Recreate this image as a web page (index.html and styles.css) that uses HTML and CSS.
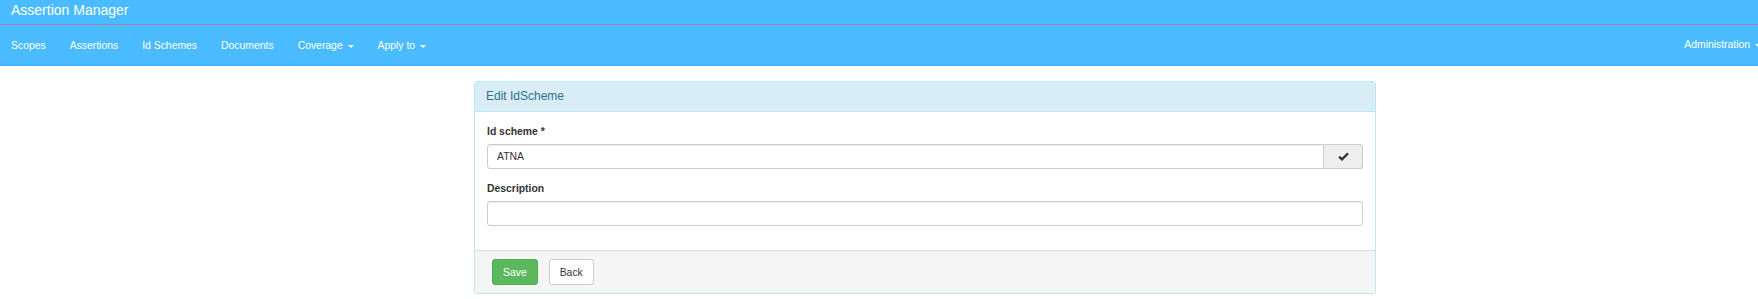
FILE: index.html
```html
<!DOCTYPE HTML>
<html>
<head>
  <title>Assertion Manager</title>
  <meta name="viewport" content="width=device-width, initial-scale=1">
  <link rel="stylesheet" href="styles.css">
</head>

<body>

<div class="topbar">Assertion Manager</div>
<div class="navbar">
  <a class="navlink" href="#">Scopes</a>
  <a class="navlink" href="#">Assertions</a>
  <a class="navlink" href="#">Id Schemes</a>
  <a class="navlink" href="#">Documents</a>
  <a class="navlink" href="#">Coverage <span class="caret"></span></a>
  <a class="navlink" href="#">Apply to <span class="caret"></span></a>
  <div class="navright">
    <a class="navlink" href="#">Administration <span class="caret"></span></a>
  </div>
</div>

<div class="page">
  <div class="panel">
    <div class="panel-heading">Edit IdScheme</div>
    <div class="panel-body">
      <div class="form-group">
        <label class="label">Id scheme *</label>
        <div class="input-group">
          <input class="input" type="text" value="ATNA">
          <span class="addon">
            <svg width="11" height="9" viewBox="0 0 11 9"><path d="M1 4.6 L4 7.4 L10 1.4" fill="none" stroke="#333" stroke-width="2.2"/></svg>
          </span>
        </div>
      </div>
      <div class="form-group">
        <label class="label">Description</label>
        <input class="input full" type="text">
      </div>
    </div>
    <div class="panel-footer">
      <button class="btn btn-save">Save</button>
      <button class="btn btn-back">Back</button>
    </div>
  </div>
</div>

</body>
</html>
```

FILE: styles.css
```css
body {
  margin: 0;
  font-family: "Liberation Sans", Arial, sans-serif;
  font-size: 10.4px;
  color: #333;
  background: #fff;
}

.topbar {
  background-color: #4bbbff;
  color: #fff;
  font-size: 14px;
  line-height: 20px;
  height: 20px;
  padding: 0 0 4px 11px;
  border-bottom: 1px solid #b07ca6;
}

.navbar {
  display: flex;
  align-items: center;
  height: 40px;
  background-color: #4bbbff;
  border-bottom: 1px solid #3db2f7;
  overflow: hidden;
  padding-left: 0;
}

.navlink {
  color: #fff;
  text-decoration: none;
  line-height: 40px;
  padding: 2px 12px 0 12px;
}

.navlink:first-child {
  padding-left: 11px;
}

.navright {
  margin-left: auto;
  margin-right: -15px;
}

.caret {
  display: inline-block;
  width: 0;
  height: 0;
  margin-left: 2px;
  vertical-align: middle;
  border-top: 3px solid #fff;
  border-left: 3px solid transparent;
  border-right: 3px solid transparent;
}

.page {
  padding: 15px 0 0 474px;
}

.panel {
  width: 900px;
  border: 1px solid #bce8f1;
  border-radius: 3px;
}

.panel-heading {
  background-color: #d9edf7;
  color: #31708f;
  font-size: 12px;
  height: 29px;
  line-height: 29px;
  padding: 0 11px;
  border-bottom: 1px solid #bce8f1;
  border-radius: 2px 2px 0 0;
}

.panel-body {
  padding: 12px;
}

.form-group {
  margin-bottom: 12px;
}

.form-group:last-child {
  margin-bottom: 12px;
}

.label {
  display: block;
  font-weight: bold;
  line-height: 16px;
  margin-bottom: 4px;
}

.input-group {
  display: flex;
}

.input {
  box-sizing: border-box;
  height: 25px;
  border: 1px solid #ccc;
  border-radius: 3px;
  padding: 0 9px;
  font-family: "Liberation Sans", Arial, sans-serif;
  font-size: 10.4px;
  color: #333;
  box-shadow: inset 0 1px 1px rgba(0, 0, 0, 0.07);
}

.input-group .input {
  flex: 1;
  border-radius: 3px 0 0 3px;
}

.full {
  display: block;
  width: 100%;
}

.addon {
  box-sizing: border-box;
  width: 39px;
  height: 25px;
  display: flex;
  align-items: center;
  justify-content: center;
  background-color: #eee;
  border: 1px solid #ccc;
  border-left: 0;
  border-radius: 0 3px 3px 0;
}

.panel-footer {
  background-color: #f5f5f5;
  border-top: 1px solid #ddd;
  padding: 8px 17px 8px 17px;
  display: flex;
  gap: 11px;
  border-radius: 0 0 2px 2px;
}

.btn {
  height: 26px;
  font-family: "Liberation Sans", Arial, sans-serif;
  font-size: 10.4px;
  padding: 0 10px;
  border-radius: 3px;
  cursor: pointer;
}

.btn-save {
  background-color: #5cb85c;
  border: 1px solid #4cae4c;
  color: #fff;
}

.btn-back {
  background-color: #fff;
  border: 1px solid #ccc;
  color: #333;
}
```
